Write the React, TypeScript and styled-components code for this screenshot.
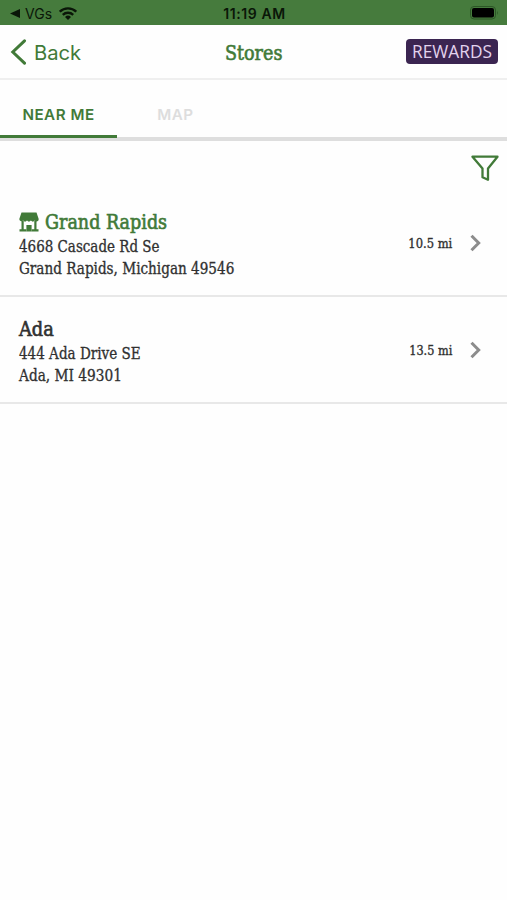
import React from "react";
import styled, { createGlobalStyle } from "styled-components";

const GREEN = "#417a38";

const Global = createGlobalStyle`
  * { box-sizing: border-box; }
  body { margin: 0; background: #fefefe; font-family: Inter, sans-serif; }
  svg { display: block; flex: none; }
`;

const Screen = styled.div`
  height: 900px;
  background: #fefefe;
  overflow: hidden;
`;

const StatusBar = styled.div`
  height: 25px;
  background: #467b3d;
  color: #0a1608;
  display: grid;
  grid-template-columns: 1fr auto 1fr;
  align-items: center;
  padding: 2px 8px 0 10px;
`;

const Carrier = styled.div`
  display: flex;
  align-items: center;
  font-size: 14px;
  line-height: 20px;
  svg:first-child { margin-right: 5px; }
  svg:last-child { margin-left: 7px; }
`;

const Clock = styled.div`
  font-size: 14px;
  font-weight: 600;
  letter-spacing: 0.6px;
  line-height: 20px;
`;

const Battery = styled.div`
  justify-self: end;
  margin-top: -1px;
`;

const Header = styled.header`
  height: 55px;
  border-bottom: 2px solid #efefef;
  display: grid;
  grid-template-columns: 1fr auto 1fr;
  align-items: center;
  padding: 0 9px 0 10px;
`;

const Back = styled.div`
  display: flex;
  align-items: center;
  gap: 7px;
  color: ${GREEN};
  font-size: 20.2px;
  line-height: 28px;
  span { padding-top: 2px; }
`;

const Slab = styled.span<{ $size: number; $fit: number; $stroke?: number; $end?: boolean }>`
  display: block;
  white-space: nowrap;
  font-family: "DejaVu Serif Condensed", "DejaVu Serif", serif;
  font-stretch: condensed;
  font-size: ${(p) => p.$size}px;
  -webkit-text-stroke: ${(p) => p.$stroke ?? 0.2}px currentColor;
  transform: scaleX(${(p) => p.$fit});
  transform-origin: ${(p) => (p.$end ? "right" : "left")} center;
`;

const Title = styled.div`
  width: 59px;
  padding-top: 2px;
  color: ${GREEN};
  line-height: 28px;
`;

const Rewards = styled.div`
  justify-self: end;
  width: 92px;
  height: 25px;
  border-radius: 4px;
  background: #3b2551;
  color: #e3d3ee;
  display: flex;
  justify-content: center;
  font-family: "Open Sans", sans-serif;
  font-size: 17.3px;
  line-height: 25px;
`;

const Tabs = styled.nav`
  display: flex;
  height: 61px;
  border-bottom: 4px solid #dedede;
`;

const Tab = styled.div<{ $active?: boolean }>`
  width: 117px;
  height: 58px;
  padding-top: 14px;
  border-bottom: 3px solid ${(p) => (p.$active ? GREEN : "transparent")};
  color: ${(p) => (p.$active ? GREEN : "#dddddd")};
  display: flex;
  align-items: center;
  justify-content: center;
  font-size: 15.2px;
  font-weight: 600;
  letter-spacing: 0.5px;
`;

const FilterBar = styled.div`
  height: 49px;
  display: flex;
  justify-content: flex-end;
  padding: 14px 8px 0;
`;

const StoreRow = styled.article`
  height: 107px;
  border-bottom: 2px solid #e8e8e8;
  display: flex;
  align-items: center;
  padding: 0 26px 0 19px;
  color: #303030;
`;

const Details = styled.div`
  flex: 1;
  padding-top: 4px;
`;

const Name = styled.div<{ $mine?: boolean }>`
  display: flex;
  align-items: center;
  gap: 6px;
  height: 27px;
  padding-bottom: 1px;
  line-height: 26px;
  color: ${(p) => (p.$mine ? GREEN : "#303030")};
`;

const Line = styled.div`
  height: 22px;
  line-height: 22px;
`;

const Distance = styled.div`
  margin-right: 18px;
  line-height: 20px;
`;

const StoreIcon = () => (
  <svg width="20" height="20" viewBox="0 0 20 20" fill={GREEN}>
    <path d="M2.500 .5h15l2.200 6.500a2.200 2.200 0 0 1-3.900 1.600 2.600 2.600 0 0 1-3.900 0 2.600 2.600 0 0 1-3.900 0 2.600 2.600 0 0 1-3.900 0A2.200 2.200 0 0 1 .3 7z" />
    <path d="M2.500 9h2.200v8.300h2.700v2.200H.5v-2.200h2zM15.300 9h2.200v8.300h2v2.200h-6.900v-2.200h2.700z" />
    <path d="M7.400 13h5.200v6.500H7.400z" />
  </svg>
);

const Chevron = () => (
  <svg width="11" height="18" viewBox="0 0 11 18" fill="none" stroke="#8c8c8c" strokeWidth="3">
    <path d="M1.500 1.700 8.700 9l-7.200 7.300" />
  </svg>
);

type Copy = { text: string; fit: number };
type Store = { name: Copy; street: Copy; city: Copy; distance: Copy; mine?: boolean };

const stores: Store[] = [
  {
    name: { text: "Grand Rapids", fit: 0.975 },
    street: { text: "4668 Cascade Rd Se", fit: 0.936 },
    city: { text: "Grand Rapids, Michigan 49546", fit: 0.944 },
    distance: { text: "10.5 mi", fit: 0.95 },
    mine: true,
  },
  {
    name: { text: "Ada", fit: 0.99 },
    street: { text: "444 Ada Drive SE", fit: 0.94 },
    city: { text: "Ada, MI 49301", fit: 0.952 },
    distance: { text: "13.5 mi", fit: 0.93 },
  },
];

export default function App() {
  return (
    <Screen>
      <Global />
      <StatusBar>
        <Carrier>
          <svg width="10" height="9" viewBox="0 0 10 9"><path d="M0 4.500 10 0v9z" fill="#0a1608" /></svg>
          VGs
          <svg width="18" height="13" viewBox="0 0 18 13" fill="none" stroke="#0a1608" strokeWidth="2.300">
            <path d="M.8 4.700a11.700 11.700 0 0 1 16.400 0M3.800 7.900a7.400 7.400 0 0 1 10.400 0" />
            <path d="M6 10a4.400 4.400 0 0 1 6 0l-3 3z" fill="#0a1608" stroke="none" />
          </svg>
        </Carrier>
        <Clock>11:19 AM</Clock>
        <Battery>
          <svg width="29" height="14" viewBox="0 0 29 14">
            <rect x=".5" y=".5" width="25" height="12.500" rx="3.500" fill="none" stroke="#2c5726" />
            <rect x="2" y="2" width="22" height="9.500" rx="2" fill="#000" />
            <path d="M27 4.500q1.500 2.200 0 4.500z" fill="#2c5726" />
          </svg>
        </Battery>
      </StatusBar>
      <Header>
        <Back>
          <svg width="17" height="26" viewBox="0 0 17 26" fill="none" stroke={GREEN} strokeWidth="3">
            <path d="M14.500 1.800 2.800 13l11.700 11.200" strokeLinecap="round" />
          </svg>
          <span>Back</span>
        </Back>
        <Title><Slab $size={20} $fit={0.975} $stroke={0.6}>Stores</Slab></Title>
        <Rewards>REWARDS</Rewards>
      </Header>
      <Tabs>
        <Tab $active>NEAR ME</Tab>
        <Tab>MAP</Tab>
      </Tabs>
      <FilterBar>
        <svg width="28" height="27" viewBox="0 0 28 27" fill="none" stroke={GREEN} strokeWidth="2.300" strokeLinejoin="round">
          <path d="M1.500 1.700h25L17 13.500v11.300l-5.500-2.500v-8.800z" />
        </svg>
      </FilterBar>
      {stores.map((s) => (
        <StoreRow key={s.name.text}>
          <Details>
            <Name $mine={s.mine}>
              {s.mine && <StoreIcon />}
              <Slab $size={20} $fit={s.name.fit} $stroke={0.6}>{s.name.text}</Slab>
            </Name>
            <Line><Slab $size={16} $fit={s.street.fit} $stroke={0.3}>{s.street.text}</Slab></Line>
            <Line><Slab $size={16} $fit={s.city.fit} $stroke={0.3}>{s.city.text}</Slab></Line>
          </Details>
          <Distance><Slab $size={13.5} $fit={s.distance.fit} $stroke={0.35} $end>{s.distance.text}</Slab></Distance>
          <Chevron />
        </StoreRow>
      ))}
    </Screen>
  );
}
